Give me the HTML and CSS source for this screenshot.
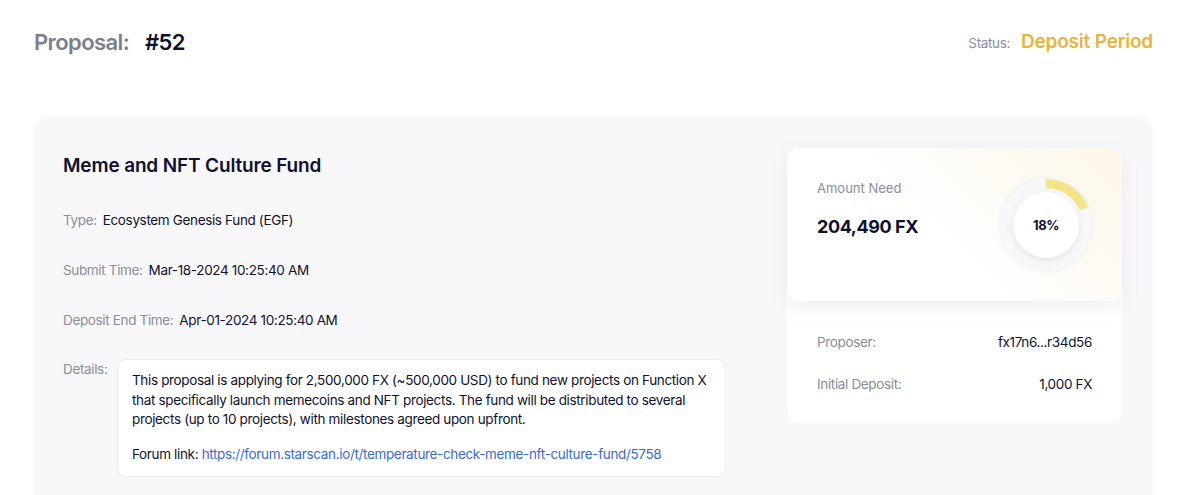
FILE: index.html
```html
<!DOCTYPE html>
<html>
<head>
<meta charset="utf-8">
<link rel="stylesheet" href="styles.css">
</head>
<body>
<div class="page">
  <header class="head">
    <h1 class="head-title"><span class="head-label">Proposal:</span><span class="head-num">#52</span></h1>
    <div class="status"><span class="status-label">Status:</span><span class="status-value">Deposit Period</span></div>
  </header>
  <section class="card">
    <div class="info">
      <h2 class="info-title">Meme and NFT Culture Fund</h2>
      <div class="row"><span class="lbl">Type:</span><span class="val">Ecosystem Genesis Fund (EGF)</span></div>
      <div class="row"><span class="lbl">Submit Time:</span><span class="val">Mar-18-2024 10:25:40 AM</span></div>
      <div class="row"><span class="lbl">Deposit End Time:</span><span class="val">Apr-01-2024 10:25:40 AM</span></div>
      <div class="details">
        <span class="lbl">Details:</span>
        <div class="details-box">
          <p>This proposal is applying for 2,500,000 FX (~500,000 USD) to fund new projects on Function X that specifically launch memecoins and NFT projects. The fund will be distributed to several projects (up to 10 projects), with milestones agreed upon upfront.</p>
          <p>Forum link: <a href="#">https://forum.starscan.io/t/temperature-check-meme-nft-culture-fund/5758</a></p>
        </div>
      </div>
    </div>
    <aside class="side">
      <div class="amount">
        <div class="amount-text">
          <div class="amount-label">Amount Need</div>
          <div class="amount-value">204,490 FX</div>
        </div>
        <div class="donut">
          <svg width="100" height="100" viewBox="0 0 100 100">
            <defs>
              <filter id="sh" x="-30%" y="-30%" width="160%" height="160%">
                <feDropShadow dx="0" dy="2" stdDeviation="3" flood-color="#8a8fa8" flood-opacity="0.22"/>
              </filter>
              <filter id="sh2" x="-30%" y="-30%" width="160%" height="160%">
                <feDropShadow dx="0" dy="0" stdDeviation="2.5" flood-color="#8a8fa8" flood-opacity="0.14"/>
              </filter>
            </defs>
            <circle cx="50" cy="50" r="46" fill="#f8f8fa" filter="url(#sh2)"/>
            <path d="M50 8.5 A41.5 41.5 0 0 1 88.1 33.6" fill="none" stroke="#f4e389" stroke-width="9"/>
            <circle cx="50" cy="50" r="33" fill="#ffffff" filter="url(#sh)"/>
          </svg>
          <span class="donut-text">18%</span>
        </div>
      </div>
      <div class="meta">
        <div class="meta-row"><span class="lbl">Proposer:</span><span class="val">fx17n6...r34d56</span></div>
        <div class="meta-row"><span class="lbl">Initial Deposit:</span><span class="val">1,000 FX</span></div>
      </div>
    </aside>
  </section>
</div>
</body>
</html>
```
FILE: styles.css
```css
* { box-sizing: border-box; }
html, body { margin: 0; padding: 0; background: #fff; }
body {
  font-family: Inter, "Liberation Sans", sans-serif;
  color: #10112e;
  font-size: 13.5px;
  letter-spacing: -0.35px;
}
.page {
  padding: 0 47px 0 34px;
}
.head {
  height: 117px;
  display: flex;
  align-items: flex-start;
  justify-content: space-between;
  padding-top: 26px;
}
.head-title {
  margin: 0;
  font-size: 22px;
  font-weight: 600;
  line-height: 32px;
  letter-spacing: -0.6px;
}
.head-label { color: #7b7e8e; margin-right: 16px; }
.head-num { color: #10112e; }
.status {
  display: flex;
  align-items: baseline;
  line-height: 32px;
}
.status-label { color: #8a8d9b; font-size: 13.5px; margin-right: 11px; }
.status-value { color: #e8b440; font-size: 19px; font-weight: 600; letter-spacing: -0.2px; }

.card {
  background: #f8f8fa;
  border-radius: 14px;
  padding: 31px 31px 31px 29px;
  display: flex;
  justify-content: space-between;
  min-height: 400px;
}
.info { width: 663px; }
.info-title {
  margin: 6px 0 0;
  font-size: 19px;
  line-height: 24px;
  font-weight: 600;
  letter-spacing: -0.15px;
}
.row {
  margin-top: 30px;
  line-height: 24px;
  display: flex;
  gap: 6px;
}
.row + .row { margin-top: 26px; }
.lbl { color: #8a8d9b; }
.val { color: #10112e; }
.details {
  display: flex;
  margin-top: 27px;
  align-items: flex-start;
}
.details .lbl { line-height: 20px; width: 54px; flex-shrink: 0; }
.details-box {
  width: 609px;
  background: #fff;
  border: 1px solid #ececf0;
  border-radius: 8px;
  padding: 11px 14px 12px;
  line-height: 19.5px;
}
.details-box p { margin: 0; }
.details-box p + p { margin-top: 15px; }
.details-box a { color: #3a6bd2; text-decoration: none; }

.side {
  width: 335px;
  height: 275px;
  background: #fff;
  border-radius: 12px;
}
.amount {
  height: 153px;
  border-radius: 12px;
  background: linear-gradient(225deg, #fdf6e8 0%, #ffffff 55%);
  box-shadow: 0 6px 18px rgba(140, 145, 170, 0.14);
  display: flex;
  align-items: flex-start;
  justify-content: space-between;
  padding: 27px 26px 0 30px;
}
.amount-text { padding-top: 4px; }
.amount-label { color: #8a8d9b; font-size: 13px; line-height: 18px; letter-spacing: 0; }
.amount-value { font-size: 18px; font-weight: 700; margin-top: 18px; line-height: 24px; letter-spacing: -0.4px; }
.donut {
  position: relative;
  width: 100px;
  height: 100px;
}
.donut svg { display: block; }
.donut-text {
  position: absolute;
  inset: 0;
  display: flex;
  align-items: center;
  justify-content: center;
  font-size: 13px;
  font-weight: 700;
}
.meta { padding: 31px 30px 0; }
.meta-row {
  display: flex;
  justify-content: space-between;
  line-height: 20px;
}
.meta-row + .meta-row { margin-top: 22px; }
```
